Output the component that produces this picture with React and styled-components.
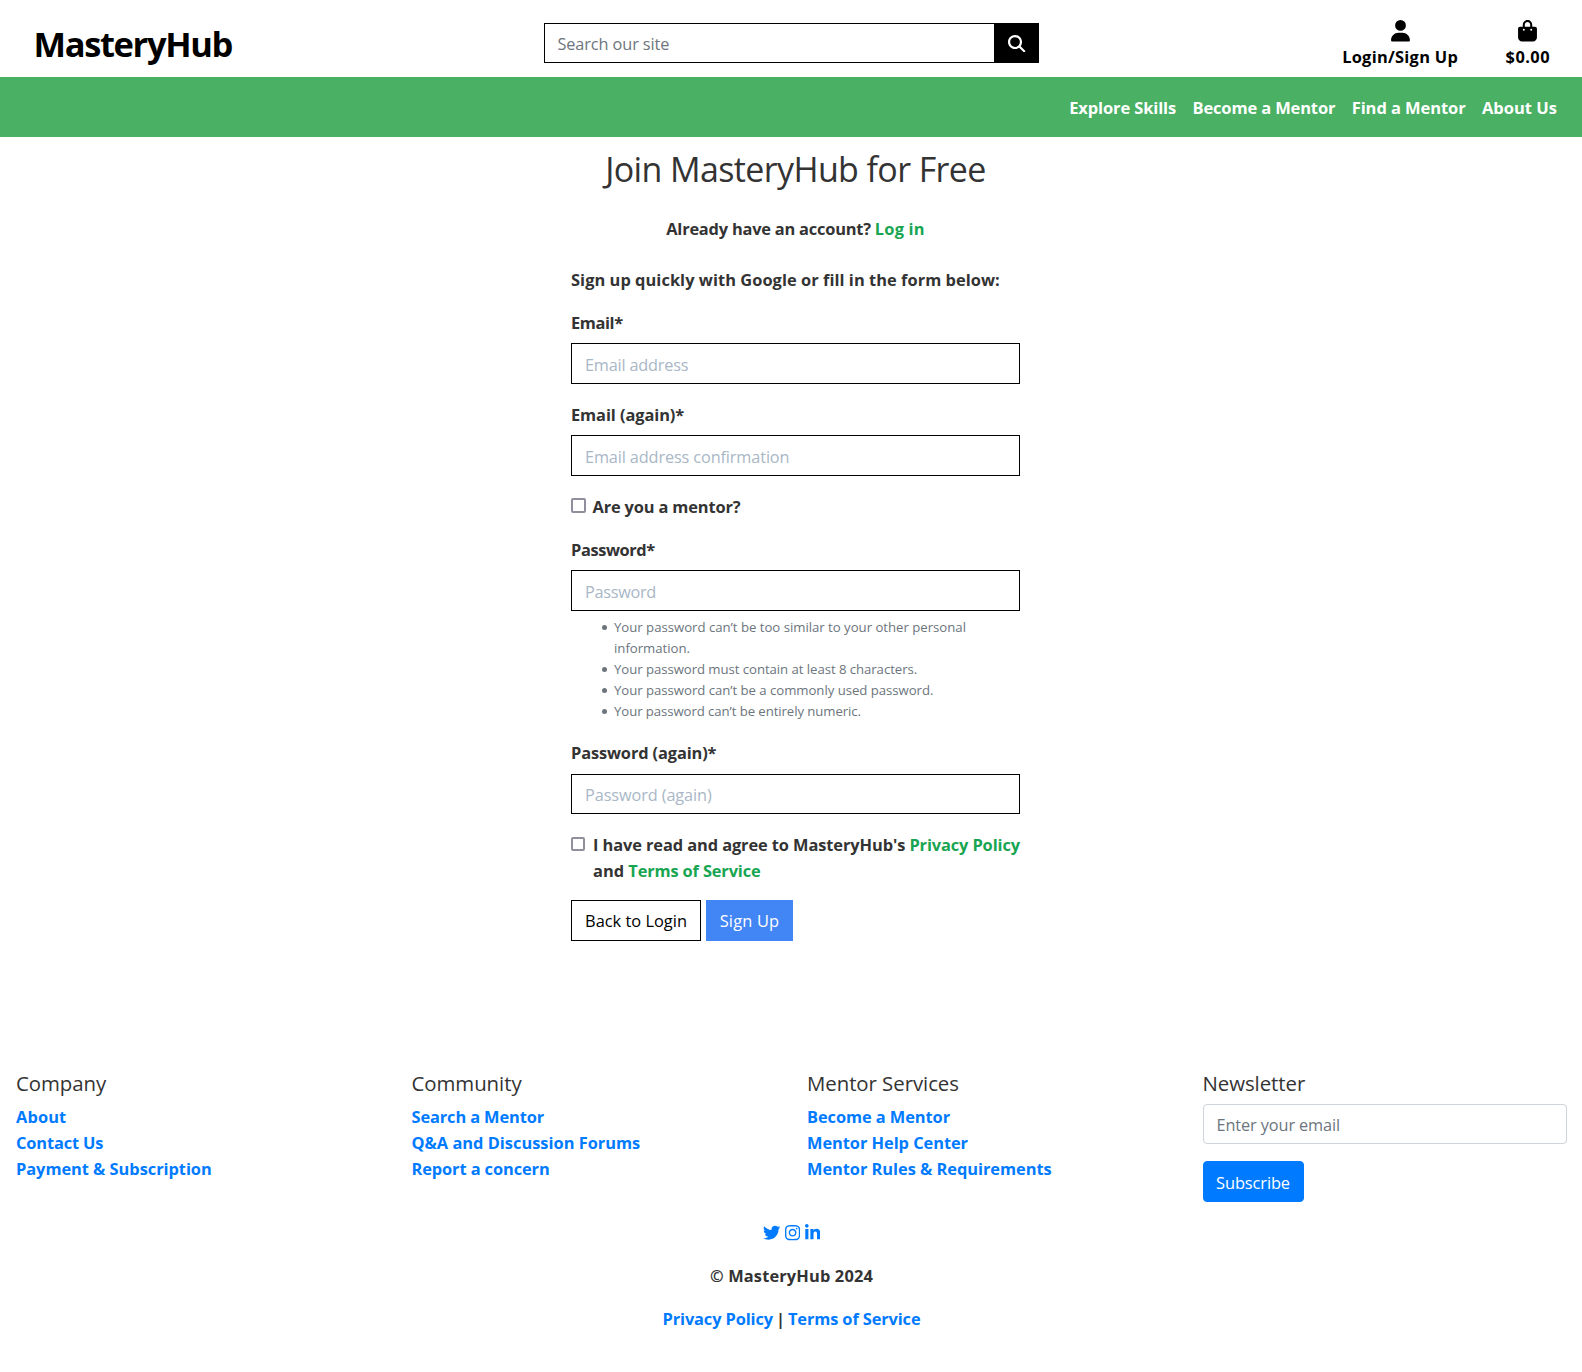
import React from "react";
import styled, { createGlobalStyle } from "styled-components";
import {
  FaMagnifyingGlass,
  FaUser,
  FaBagShopping,
  FaTwitter,
  FaInstagram,
  FaLinkedinIn,
} from "react-icons/fa6";

const GlobalStyle = createGlobalStyle`
  *, *::before, *::after { box-sizing: border-box; }
  body {
    margin: 0;
    background: #fff;
    color: #333;
    font-family: "Segoe UI", "Open Sans", "Noto Sans", sans-serif;
    font-size: 16.4px;
    font-weight: 700;
    line-height: 26px;
  }
  a { text-decoration: none; }
`;

const Page = styled.div`
  display: flex;
  flex-direction: column;
  min-height: 1372px;
`;

const Track = styled.span`
  letter-spacing: ${(p) => p.$ls || 0}px;
  white-space: nowrap;
`;

const Header = styled.header`
  display: grid;
  grid-template-columns: 544px 495px 1fr;
  height: 77px;
  color: #000;
`;

const Brand = styled.a`
  padding: 20px 0 0 33.5px;
  color: #000;
  font-size: 34.5px;
  line-height: 48px;
  letter-spacing: -1.36px;
`;

const SearchBar = styled.form`
  display: flex;
  margin-top: 23px;
  height: 40px;
`;

const TextField = styled.input`
  display: block;
  width: 100%;
  height: ${(p) => p.$h || 41}px;
  margin: 0;
  padding: ${(p) => (p.$h === 40 ? 2 : 3)}px ${(p) => p.$pad || 13}px 0;
  border: 1px solid ${(p) => p.$border || "#000"};
  border-radius: ${(p) => p.$radius || 0}px;
  outline: 0;
  background: #fff;
  font: 400 16.3px/26px "Segoe UI", "Open Sans", "Noto Sans", sans-serif;
  letter-spacing: ${(p) => p.$ls || 0}px;
  &::placeholder {
    color: ${(p) => p.$hint || "#a9b7c6"};
    opacity: 1;
  }
`;

const SearchButton = styled.button`
  display: flex;
  flex: 0 0 44px;
  align-items: center;
  justify-content: center;
  padding: 1px 0 0;
  border: 0;
  background: #000;
  color: #fff;
  font-size: 17.3px;
`;

const Account = styled.div`
  display: flex;
  justify-content: flex-end;
  gap: 47.5px;
  padding: 20px 32px 0 0;
`;

const AccountLink = styled.a`
  display: flex;
  flex-direction: column;
  align-items: center;
  color: #000;
  svg {
    display: block;
    width: 19px;
    height: 21.6px;
    margin-bottom: 2.4px;
  }
`;

const Nav = styled.nav`
  display: flex;
  justify-content: flex-end;
  gap: 16.4px;
  height: 60px;
  padding: 18px 25px 0 0;
  background: #49b064;
  font-size: 16.5px;
`;

const NavLink = styled.a`
  color: #fff;
  letter-spacing: ${(p) => p.$ls || 0}px;
`;

const Main = styled.main`
  width: 449px;
  height: 934px;
  margin-left: 571px;
  padding-top: 11px;
`;

const Title = styled.h2`
  margin: 0 0 26px;
  font-size: 34px;
  font-weight: 400;
  line-height: 42px;
  letter-spacing: -0.62px;
  text-align: center;
  white-space: nowrap;
`;

const Prompt = styled.p`
  margin: 0 0 ${(p) => p.$gap}px;
  text-align: ${(p) => (p.$center ? "center" : "left")};
  white-space: nowrap;
`;

const GreenLink = styled.a`
  color: #18a551;
  letter-spacing: ${(p) => p.$ls || 0}px;
`;

const Field = styled.div`
  margin-bottom: ${(p) => p.$gap ?? 18}px;
`;

const Label = styled.label`
  display: block;
  margin-bottom: ${(p) => p.$gap ?? 7}px;
  letter-spacing: ${(p) => p.$ls || 0}px;
`;

const CheckRow = styled.label`
  display: flex;
  margin-bottom: ${(p) => p.$gap}px;
  white-space: nowrap;
`;

const Checkbox = styled.input`
  appearance: none;
  flex: none;
  width: ${(p) => p.$size}px;
  height: ${(p) => p.$size}px;
  margin: ${(p) => p.$top}px ${(p) => p.$right}px 0 0;
  border: 2px solid #8f8f9d;
  border-radius: 2px;
  background: #fff;
`;

const Rules = styled.ul`
  margin: 6px 0 18px;
  padding: 0;
  list-style: none;
  color: #6c757d;
  font-size: 13.2px;
  font-weight: 400;
  line-height: 21.1px;
`;

const Rule = styled.li`
  display: flex;
  padding-left: 31px;
  letter-spacing: ${(p) => p.$ls || 0}px;
  &::before {
    content: "";
    flex: none;
    width: 5px;
    height: 5px;
    margin: 8px 7px 0 0;
    border-radius: 50%;
    background: #6c757d;
  }
`;

const Actions = styled.div`
  display: flex;
  gap: 5px;
`;

const Button = styled.button`
  width: ${(p) => p.$w}px;
  height: 41px;
  padding: ${(p) => p.$top ?? 1}px 0 0;
  border: 1px solid ${(p) => p.$border || p.$bg};
  border-radius: ${(p) => p.$radius || 0}px;
  background: ${(p) => p.$bg};
  color: ${(p) => p.$color || "#fff"};
  font: 400 16.4px/26px "Segoe UI", "Open Sans", "Noto Sans", sans-serif;
  letter-spacing: ${(p) => p.$ls || 0}px;
`;

const FooterColumns = styled.div`
  display: grid;
  grid-template-columns: repeat(4, 1fr);
  height: 149px;
`;

const FooterColumn = styled.section`
  display: flex;
  flex-direction: column;
  align-items: flex-start;
  padding: 0 15.5px 0 16px;
`;

const FooterTitle = styled.h5`
  margin: 0 0 8px;
  font-size: 20.4px;
  font-weight: 400;
  line-height: 25px;
  letter-spacing: -0.05px;
`;

const BlueLink = styled.a`
  display: ${(p) => (p.$inline ? "inline" : "block")};
  color: #007bff;
  letter-spacing: ${(p) => p.$ls ?? -0.04}px;
  word-spacing: 0;
  white-space: nowrap;
`;

const Newsletter = styled.form`
  display: flex;
  flex-direction: column;
  align-items: flex-start;
  gap: 17px;
  width: 100%;
`;

const Closing = styled.div`
  display: flex;
  flex-direction: column;
  align-items: center;
  gap: 17px;
  padding-left: 1px;
`;

const Social = styled.div`
  display: flex;
  align-items: center;
  gap: 4.4px;
  height: 26px;
  padding-bottom: 1px;
  color: #007bff;
  svg {
    display: block;
    width: 15.2px;
    height: 17.33px;
  }
  svg:first-child {
    width: 17.33px;
  }
`;

const Legal = styled.div`
  word-spacing: -1.3px;
`;

const columns = [
  ["Company", [["About", 0.1], ["Contact Us", -0.15], ["Payment & Subscription"]]],
  ["Community", [["Search a Mentor", -0.12], ["Q&A and Discussion Forums", 0], ["Report a concern", -0.1]]],
  ["Mentor Services", [["Become a Mentor", -0.07], ["Mentor Help Center", -0.05], ["Mentor Rules & Requirements"]]],
];

const rules = [
  ["Your password can’t be too similar to your other personal information.", -0.02],
  ["Your password must contain at least 8 characters.", -0.06],
  ["Your password can’t be a commonly used password.", -0.04],
  ["Your password can’t be entirely numeric.", -0.08],
];

export default function App() {
  return (
    <Page>
      <GlobalStyle />
      <Header>
        <Brand>MasteryHub</Brand>
        <SearchBar>
          <TextField $h={40} $pad={12.5} $ls={-0.1} $hint="#6c757d" placeholder="Search our site" />
          <SearchButton type="button" aria-label="Search">
            <FaMagnifyingGlass />
          </SearchButton>
        </SearchBar>
        <Account>
          <AccountLink>
            <FaUser />
            <Track $ls={0.28}>Login/Sign Up</Track>
          </AccountLink>
          <AccountLink>
            <FaBagShopping />
            <Track $ls={0.45}>$0.00</Track>
          </AccountLink>
        </Account>
      </Header>
      <Nav>
        <NavLink $ls={-0.12}>Explore Skills</NavLink>
        <NavLink $ls={-0.15}>Become a Mentor</NavLink>
        <NavLink $ls={-0.08}>Find a Mentor</NavLink>
        <NavLink>About Us</NavLink>
      </Nav>
      <Main>
        <Title>Join MasteryHub for Free</Title>
        <Prompt $center $gap={25}>
          <Track $ls={-0.21}>Already have an account? </Track>
          <GreenLink $ls={0.2}>Log in</GreenLink>
        </Prompt>
        <Prompt $gap={17}>
          <Track $ls={0.05}>Sign up quickly with Google or fill in the form below:</Track>
        </Prompt>
        <Field>
          <Label $ls={-0.4}>Email*</Label>
          <TextField $ls={-0.2} placeholder="Email address" />
        </Field>
        <Field>
          <Label $ls={-0.08}>Email (again)*</Label>
          <TextField $ls={-0.13} placeholder="Email address confirmation" />
        </Field>
        <CheckRow $gap={17}>
          <Checkbox type="checkbox" $size={15} $top={4} $right={6.5} />
          <Track $ls={-0.15}>Are you a mentor?</Track>
        </CheckRow>
        <Field $gap={0}>
          <Label $ls={-0.4}>Password*</Label>
          <TextField $ls={-0.3} placeholder="Password" />
        </Field>
        <Rules>
          {rules.map(([text, ls]) => (
            <Rule key={text} $ls={ls}>
              <span>{text}</span>
            </Rule>
          ))}
        </Rules>
        <Field>
          <Label $ls={-0.13} $gap={8}>Password (again)*</Label>
          <TextField $h={40} $ls={-0.1} placeholder="Password (again)" />
        </Field>
        <CheckRow $gap={16}>
          <Checkbox type="checkbox" $size={14} $top={5} $right={8} />
          <span>
            <Track $ls={-0.09}>I have read and agree to MasteryHub's </Track>
            <GreenLink $ls={-0.12}>Privacy Policy</GreenLink>
            <br />
            and <GreenLink $ls={-0.14}>Terms of Service</GreenLink>
          </span>
        </CheckRow>
        <Actions>
          <Button $w={130} $bg="#fff" $border="#000" $color="#000">Back to Login</Button>
          <Button $w={87} $bg="#4285f4" $ls={0.2}>Sign Up</Button>
        </Actions>
      </Main>
      <footer>
        <FooterColumns>
          {columns.map(([title, links]) => (
            <FooterColumn key={title}>
              <FooterTitle>{title}</FooterTitle>
              {links.map(([text, ls]) => (
                <BlueLink key={text} $ls={ls}>{text}</BlueLink>
              ))}
            </FooterColumn>
          ))}
          <FooterColumn>
            <FooterTitle>Newsletter</FooterTitle>
            <Newsletter>
              <TextField $h={40} $ls={-0.1} $border="#ced4da" $radius={4} $hint="#6c757d" placeholder="Enter your email" />
              <Button type="button" $top={3} $w={101} $bg="#007bff" $radius={4} $ls={-0.1}>Subscribe</Button>
            </Newsletter>
          </FooterColumn>
        </FooterColumns>
        <Closing>
          <Social>
            <FaTwitter />
            <FaInstagram />
            <FaLinkedinIn />
          </Social>
          <Track $ls={0.15}>© MasteryHub 2024</Track>
          <Legal>
            <BlueLink $inline $ls={-0.12}>Privacy Policy</BlueLink> | <BlueLink $inline $ls={-0.12}>Terms of Service</BlueLink>
          </Legal>
        </Closing>
      </footer>
    </Page>
  );
}
